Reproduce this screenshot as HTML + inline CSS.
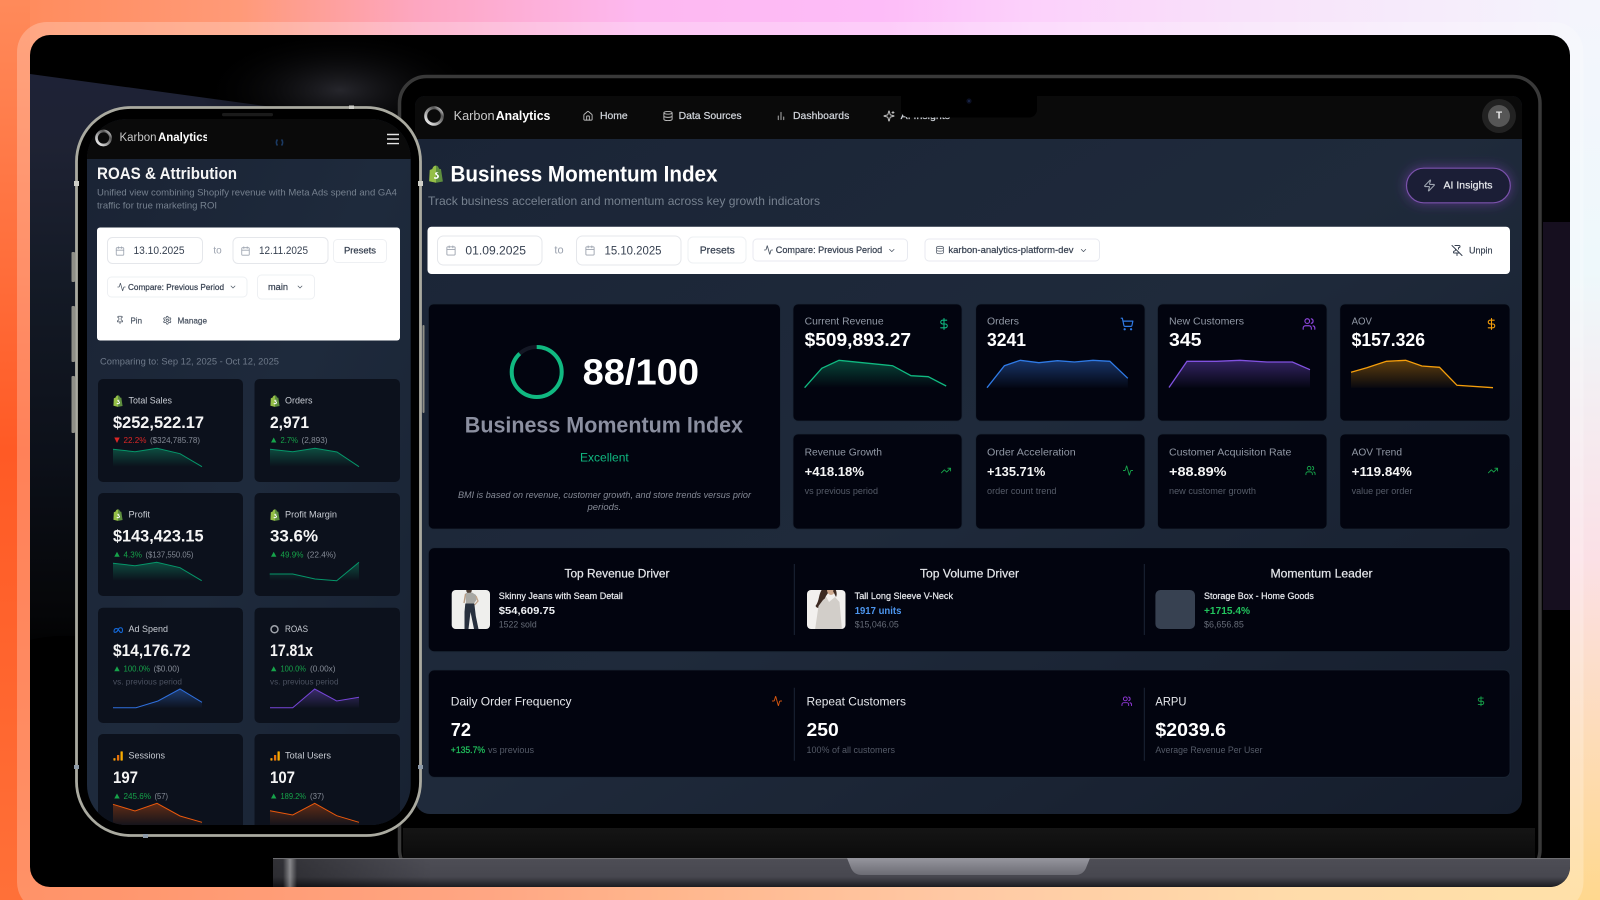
<!DOCTYPE html>
<html lang="en"><head><meta charset="utf-8"><title>Karbon Analytics</title>
<style>
html,body{margin:0;padding:0;background:#000;width:1600px;height:900px;overflow:hidden}
svg{display:block;font-family:"Liberation Sans",sans-serif;filter:blur(.3px)}
text{dominant-baseline:central}
.i{fill:none;stroke:currentColor;stroke-width:2;stroke-linecap:round;stroke-linejoin:round}
.b{font-weight:700}
.s{font-weight:400;fill:currentColor;stroke:currentColor;stroke-width:.22}
</style></head><body>
<svg width="1600" height="900" viewBox="0 0 1600 900" xmlns="http://www.w3.org/2000/svg">
<defs>
<linearGradient id="gT"><stop offset="0" stop-color="#ff8a5a"/><stop offset=".15" stop-color="#ff9a78"/><stop offset=".26" stop-color="#fda6c0"/><stop offset=".4" stop-color="#fdb8f0"/><stop offset=".55" stop-color="#fdbcf8"/><stop offset=".64" stop-color="#fcd0fb"/><stop offset=".78" stop-color="#f8e2fa"/><stop offset="1" stop-color="#f4f5fc"/></linearGradient>
<linearGradient id="gB"><stop offset="0" stop-color="#ff7038"/><stop offset=".3" stop-color="#ff8a5c"/><stop offset=".42" stop-color="#ffa06a"/><stop offset=".6" stop-color="#ffb888"/><stop offset=".8" stop-color="#ffd090"/><stop offset="1" stop-color="#ffd88e"/></linearGradient>
<linearGradient id="gL" x2="0" y2="1"><stop offset="0" stop-color="#ff8a5a"/><stop offset=".5" stop-color="#ff5a25"/><stop offset="1" stop-color="#ff7038"/></linearGradient>
<linearGradient id="gR" x2="0" y2="1"><stop offset="0" stop-color="#f4f5fc"/><stop offset=".3" stop-color="#eef8fb"/><stop offset=".62" stop-color="#fbe0e6"/><stop offset="1" stop-color="#ffd88e"/></linearGradient>
<linearGradient id="gN" x2="0" y2="1"><stop offset="0" stop-color="#1e2236"/><stop offset=".12" stop-color="#1e2233"/><stop offset=".35" stop-color="#141a26"/><stop offset=".65" stop-color="#0c1019"/><stop offset=".92" stop-color="#050608"/><stop offset="1" stop-color="#000"/></linearGradient>
<radialGradient id="gG"><stop offset="0" stop-color="#26262c"/><stop offset="1" stop-color="#000" stop-opacity="0"/></radialGradient>
<linearGradient id="gS" x1="0" y1="0" x2="1" y2="1"><stop offset="0" stop-color="#1a2436"/><stop offset=".5" stop-color="#1f2a3b"/><stop offset="1" stop-color="#151d2c"/></linearGradient>
<linearGradient id="gP" x1="0" y1="0" x2="1" y2="1"><stop offset="0" stop-color="#1a2334"/><stop offset=".5" stop-color="#1e2a3c"/><stop offset="1" stop-color="#182232"/></linearGradient>
<linearGradient id="gChin" x2="0" y2="1"><stop offset="0" stop-color="#151515"/><stop offset="1" stop-color="#080808"/></linearGradient>
<linearGradient id="gBase" x2="0" y2="1"><stop offset="0" stop-color="#56565c"/><stop offset=".08" stop-color="#4d4d55"/><stop offset=".65" stop-color="#47474f"/><stop offset=".92" stop-color="#26262b"/><stop offset="1" stop-color="#1c1c20"/></linearGradient>
<linearGradient id="gNotch" x2="0" y2="1"><stop offset="0" stop-color="#96969e"/><stop offset="1" stop-color="#6c6c74"/></linearGradient>
<linearGradient id="gHi"><stop offset="0" stop-color="#fff" stop-opacity="0"/><stop offset=".5" stop-color="#fff" stop-opacity=".42"/><stop offset="1" stop-color="#fff" stop-opacity="0"/></linearGradient>
<linearGradient id="gHd"><stop offset="0" stop-color="#000" stop-opacity=".38"/><stop offset="1" stop-color="#000" stop-opacity="0"/></linearGradient>
<linearGradient id="gRing" x1="0" y1="1" x2="1" y2="0"><stop offset="0" stop-color="#fff"/><stop offset=".5" stop-color="#8a8a8a"/><stop offset=".75" stop-color="#555"/><stop offset="1" stop-color="#eee"/></linearGradient>
<linearGradient id="aG" x2="0" y2="1"><stop offset="0" stop-color="#10b981" stop-opacity=".36"/><stop offset="1" stop-color="#10b981" stop-opacity="0"/></linearGradient>
<linearGradient id="aB" x2="0" y2="1"><stop offset="0" stop-color="#3b82f6" stop-opacity=".38"/><stop offset="1" stop-color="#3b82f6" stop-opacity=".02"/></linearGradient>
<linearGradient id="aP" x2="0" y2="1"><stop offset="0" stop-color="#8b5cf6" stop-opacity=".36"/><stop offset="1" stop-color="#8b5cf6" stop-opacity=".02"/></linearGradient>
<linearGradient id="aO" x2="0" y2="1"><stop offset="0" stop-color="#f59e0b" stop-opacity=".38"/><stop offset="1" stop-color="#f59e0b" stop-opacity=".03"/></linearGradient>
<linearGradient id="aR" x2="0" y2="1"><stop offset="0" stop-color="#ea580c" stop-opacity=".38"/><stop offset="1" stop-color="#ea580c" stop-opacity=".03"/></linearGradient>
<filter id="glow" x="-40%" y="-80%" width="180%" height="260%"><feGaussianBlur stdDeviation="6"/></filter>
<clipPath id="cFrame"><rect x="30" y="35" width="1540" height="852" rx="20"/></clipPath>
<clipPath id="cScreen"><path d="M425 96H1512a10 10 0 0 1 10 10V799a15 15 0 0 1-15 15H430a15 15 0 0 1-15-15V106a10 10 0 0 1 10-10z"/></clipPath>
<clipPath id="cPhone"><rect x="87" y="119" width="323.7" height="706" rx="40"/></clipPath>
<clipPath id="cPLogo"><rect x="90" y="125" width="117" height="28"/></clipPath>
<clipPath id="c1"><rect x="451.7" y="590" width="38.3" height="39" rx="4"/></clipPath>
<clipPath id="c2"><rect x="807" y="590" width="38.5" height="39" rx="4"/></clipPath>

<symbol id="cal" viewBox="0 0 24 24"><rect class="i" x="3" y="4" width="18" height="18" rx="2"/><path class="i" d="M16 2v4M8 2v4M3 10h18"/></symbol>
<symbol id="home" viewBox="0 0 24 24"><path class="i" d="M15 21v-8a1 1 0 0 0-1-1h-4a1 1 0 0 0-1 1v8"/><path class="i" d="M3 10a2 2 0 0 1 .709-1.528l7-5.999a2 2 0 0 1 2.582 0l7 5.999A2 2 0 0 1 21 10v9a2 2 0 0 1-2 2H5a2 2 0 0 1-2-2z"/></symbol>
<symbol id="db" viewBox="0 0 24 24"><ellipse class="i" cx="12" cy="5" rx="9" ry="3"/><path class="i" d="M3 5V19A9 3 0 0 0 21 19V5M3 12A9 3 0 0 0 21 12"/></symbol>
<symbol id="bars" viewBox="0 0 24 24"><path class="i" d="M18 20v-6M12 20V4M6 20v-8"/></symbol>
<symbol id="spark" viewBox="0 0 24 24"><path class="i" d="M9.937 15.5A2 2 0 0 0 8.5 14.063l-6.135-1.582a.5.5 0 0 1 0-.962L8.5 9.936A2 2 0 0 0 9.937 8.5l1.582-6.135a.5.5 0 0 1 .963 0L14.063 8.5A2 2 0 0 0 15.5 9.937l6.135 1.581a.5.5 0 0 1 0 .964L15.5 14.063a2 2 0 0 0-1.437 1.437l-1.582 6.135a.5.5 0 0 1-.963 0z"/><path class="i" d="M20 3v4M22 5h-4"/></symbol>
<symbol id="act" viewBox="0 0 24 24"><path class="i" d="M22 12h-2.48a2 2 0 0 0-1.93 1.46l-2.35 8.36a.25.25 0 0 1-.48 0L9.24 2.18a.25.25 0 0 0-.48 0l-2.35 8.36A2 2 0 0 1 4.49 12H2"/></symbol>
<symbol id="chev" viewBox="0 0 24 24"><path class="i" d="m6 9 6 6 6-6"/></symbol>
<symbol id="zap" viewBox="0 0 24 24"><path class="i" d="M4 14a1 1 0 0 1-.78-1.63l9.9-10.2a.5.5 0 0 1 .86.46l-1.92 6.02A1 1 0 0 0 13 10h7a1 1 0 0 1 .78 1.63l-9.9 10.2a.5.5 0 0 1-.86-.46l1.92-6.02A1 1 0 0 0 11 14z"/></symbol>
<symbol id="pin" viewBox="0 0 24 24"><path class="i" d="M12 17v5"/><path class="i" d="M9 10.76a2 2 0 0 1-1.11 1.79l-1.78.9A2 2 0 0 0 5 15.24V16a1 1 0 0 0 1 1h12a1 1 0 0 0 1-1v-.76a2 2 0 0 0-1.11-1.79l-1.78-.9A2 2 0 0 1 15 10.76V7a1 1 0 0 1 1-1 2 2 0 0 0 0-4H8a2 2 0 0 0 0 4 1 1 0 0 1 1 1z"/></symbol>
<symbol id="pinoff" viewBox="0 0 24 24"><path class="i" d="M12 17v5M15 9.34V7a1 1 0 0 1 1-1 2 2 0 0 0 0-4H7.89M2 2l20 20M9 9v1.76a2 2 0 0 1-1.11 1.79l-1.78.9A2 2 0 0 0 5 15.24V16a1 1 0 0 0 1 1h11"/></symbol>
<symbol id="gear" viewBox="0 0 24 24"><path class="i" d="M12.22 2h-.44a2 2 0 0 0-2 2v.18a2 2 0 0 1-1 1.73l-.43.25a2 2 0 0 1-2 0l-.15-.08a2 2 0 0 0-2.73.73l-.22.38a2 2 0 0 0 .73 2.73l.15.1a2 2 0 0 1 1 1.72v.51a2 2 0 0 1-1 1.74l-.15.09a2 2 0 0 0-.73 2.73l.22.38a2 2 0 0 0 2.73.73l.15-.08a2 2 0 0 1 2 0l.43.25a2 2 0 0 1 1 1.73V20a2 2 0 0 0 2 2h.44a2 2 0 0 0 2-2v-.18a2 2 0 0 1 1-1.73l.43-.25a2 2 0 0 1 2 0l.15.08a2 2 0 0 0 2.73-.73l.22-.39a2 2 0 0 0-.73-2.73l-.15-.08a2 2 0 0 1-1-1.74v-.5a2 2 0 0 1 1-1.74l.15-.09a2 2 0 0 0 .73-2.73l-.22-.38a2 2 0 0 0-2.73-.73l-.15.08a2 2 0 0 1-2 0l-.43-.25a2 2 0 0 1-1-1.73V4a2 2 0 0 0-2-2z"/><circle class="i" cx="12" cy="12" r="3"/></symbol>
<symbol id="usd" viewBox="0 0 24 24"><path class="i" d="M12 2v20M17 5H9.5a3.5 3.5 0 0 0 0 7h5a3.5 3.5 0 0 1 0 7H6"/></symbol>
<symbol id="cart" viewBox="0 0 24 24"><circle class="i" cx="8" cy="21" r="1"/><circle class="i" cx="19" cy="21" r="1"/><path class="i" d="M2.05 2.05h2l2.66 12.42a2 2 0 0 0 2 1.58h9.78a2 2 0 0 0 1.95-1.57l1.65-7.43H5.12"/></symbol>
<symbol id="users" viewBox="0 0 24 24"><path class="i" d="M16 21v-2a4 4 0 0 0-4-4H6a4 4 0 0 0-4 4v2"/><circle class="i" cx="9" cy="7" r="4"/><path class="i" d="M22 21v-2a4 4 0 0 0-3-3.87M16 3.13a4 4 0 0 1 0 7.75"/></symbol>
<symbol id="trend" viewBox="0 0 24 24"><path class="i" d="M22 7 13.5 15.5 8.5 10.5 2 17M16 7h6v6"/></symbol>
<symbol id="shop" viewBox="0 0 24 28"><path d="M2 7.5 6 6C7 2 9.5.5 12 .5V28L1 25.5z" fill="#95bf47"/><path d="M12 .5C15 .5 16 3 17 5.5l3 .7L23 26l-11 2z" fill="#5e8e3e"/><path d="M15.5 11.6c-.9-.5-4.6-1.2-5 1.3-.4 2.7 3.8 2.6 3.4 5.2-.3 1.7-2.8 1.6-4.5.5l-.7 2.4c2.7 1.5 7.4.9 8-2.8.5-3.3-3.6-3.6-3.3-5.1.2-.9 1.9-.7 2.6-.3z" fill="#fff"/></symbol>
<symbol id="ga" viewBox="0 0 24 24"><rect x="1" y="17" width="5" height="6" rx="1" fill="#f59e0b"/><rect x="9.5" y="9.5" width="5.5" height="13.5" rx="1" fill="#e8710a"/><rect x="18" y="1" width="5.5" height="22" rx="1" fill="#f9ab00"/></symbol>
</defs>

<!-- gradient backdrop -->
<rect width="1600" height="900" fill="url(#gT)"/>
<rect y="760" width="1600" height="140" fill="url(#gB)"/>
<rect width="30" height="900" fill="url(#gL)"/>
<rect x="1570" width="30" height="900" fill="url(#gR)"/>
<rect x="17" y="22" width="1566.5" height="890" rx="30" fill="#fff" fill-opacity=".24"/>

<!-- black frame -->
<g clip-path="url(#cFrame)">
<rect x="30" y="35" width="1540" height="852" fill="#000"/>
<path d="M30 74 280 108V660H30z" fill="url(#gN)"/>
<path d="M30 640C70 630 110 640 150 650V660H30z" fill="#000"/>
<ellipse cx="340" cy="90" rx="140" ry="60" fill="url(#gG)"/>
<rect x="1543" y="222" width="27" height="388" fill="#160f1f"/>

<!-- laptop body -->
<rect x="399.5" y="76.5" width="1140.5" height="800" rx="27" fill="#000" stroke="#393939" stroke-width="3.5"/>
<rect x="403" y="828" width="1132" height="40" fill="url(#gChin)"/>
<g clip-path="url(#cScreen)">
<rect x="415" y="96" width="1108" height="718" fill="url(#gS)"/>
<rect x="415" y="96" width="1108" height="43" fill="#0a0a0a"/>

<!-- top nav -->
<circle cx="434" cy="116" r="8.3" fill="none" stroke="url(#gRing)" stroke-width="3"/>
<text x="453.6" y="116" font-size="12.5" fill="#c9c9c9" textLength="41" lengthAdjust="spacingAndGlyphs">Karbon</text>
<text x="495.7" y="116" font-size="12.5" class="b" fill="#fff" textLength="54.7" lengthAdjust="spacingAndGlyphs">Analytics</text>
<use href="#home" x="582.5" y="110.5" width="11" height="11" color="#bdbdbd"/>
<text x="600" y="116" font-size="10.5" color="#d1d5db" class="s" textLength="27.7" lengthAdjust="spacingAndGlyphs">Home</text>
<use href="#db" x="662.5" y="110.5" width="11" height="11" color="#bdbdbd"/>
<text x="678.6" y="116" font-size="10.5" color="#d1d5db" class="s" textLength="63" lengthAdjust="spacingAndGlyphs">Data Sources</text>
<use href="#bars" x="775.5" y="110.5" width="11" height="11" color="#bdbdbd"/>
<text x="793" y="116" font-size="10.5" color="#d1d5db" class="s" textLength="56.3" lengthAdjust="spacingAndGlyphs">Dashboards</text>
<use href="#spark" x="883" y="110" width="12" height="12" color="#bdbdbd"/>
<text x="900.6" y="116" font-size="10.5" color="#d1d5db" class="s" textLength="49.4" lengthAdjust="spacingAndGlyphs">AI Insights</text>
<path d="M901 96H1037V109a8 8 0 0 1-8 8.5H909a8 8 0 0 1-8-8.5z" fill="#000"/>
<circle cx="969" cy="101" r="2.6" fill="#0b1024"/><circle cx="969" cy="101" r="1" fill="#1c2a50"/>
<circle cx="1499" cy="116" r="17" fill="#222"/><circle cx="1499" cy="116" r="11" fill="#565656"/>
<text x="1499" y="116" font-size="10" class="b" fill="#eee" text-anchor="middle">T</text>

<!-- heading -->
<use href="#shop" x="428.5" y="165" width="15" height="18"/>
<text x="450.5" y="174" font-size="22" class="b" fill="#fff" textLength="267" lengthAdjust="spacingAndGlyphs">Business Momentum Index</text>
<text x="428" y="201" font-size="12" fill="#76818f" textLength="392" lengthAdjust="spacingAndGlyphs">Track business acceleration and momentum across key growth indicators</text>
<rect x="1406" y="168" width="104.5" height="35" rx="17.5" fill="#8b45c8" fill-opacity=".55" filter="url(#glow)"/>
<rect x="1406.5" y="168.2" width="103.8" height="34.6" rx="17.3" fill="#1b1e36" stroke="#7a52ab" stroke-width="1.2"/>
<use href="#zap" x="1423" y="179" width="13" height="13" color="#9ca3af"/>
<text x="1443.5" y="185.5" font-size="10.5" class="s" color="#e5e7eb" textLength="49" lengthAdjust="spacingAndGlyphs">AI Insights</text>

<!-- filter bar -->
<rect x="427.5" y="226.7" width="1082.5" height="47.3" rx="4" fill="#fff"/>
<rect x="437.5" y="236" width="104.5" height="29" rx="6" fill="#fff" stroke="#e5e7eb"/>
<use href="#cal" x="445.5" y="244" width="11" height="13" color="#9ca3af"/>
<text x="465.4" y="250.3" font-size="12" fill="#374151" textLength="60.6" lengthAdjust="spacingAndGlyphs">01.09.2025</text>
<text x="559" y="250.3" font-size="11" fill="#9ca3af" text-anchor="middle">to</text>
<rect x="576.5" y="236" width="104.5" height="29" rx="6" fill="#fff" stroke="#e5e7eb"/>
<use href="#cal" x="584.5" y="244" width="11" height="13" color="#9ca3af"/>
<text x="604.5" y="250.3" font-size="12" fill="#374151" textLength="57" lengthAdjust="spacingAndGlyphs">15.10.2025</text>
<rect x="688" y="237" width="58" height="26" rx="5" fill="#fff" stroke="#eef0f3"/>
<text x="699.7" y="250.3" font-size="10.5" class="s" color="#374151" textLength="35.2" lengthAdjust="spacingAndGlyphs">Presets</text>
<rect x="753" y="239" width="154.5" height="22" rx="4" fill="#fff" stroke="#e8eaf0"/>
<use href="#act" x="763.5" y="245" width="10" height="10" color="#4b5563"/>
<text x="775.8" y="250.3" font-size="9.5" class="s" color="#374151" textLength="106.4" lengthAdjust="spacingAndGlyphs">Compare: Previous Period</text>
<use href="#chev" x="887.3" y="246" width="9" height="9" color="#4b5563"/>
<rect x="925" y="239" width="174.5" height="22" rx="4" fill="#fff" stroke="#e8eaf0"/>
<use href="#db" x="935.5" y="245" width="9" height="10" color="#4b5563"/>
<text x="948.4" y="250.3" font-size="9.5" class="s" color="#374151" textLength="125.1" lengthAdjust="spacingAndGlyphs">karbon-analytics-platform-dev</text>
<use href="#chev" x="1079" y="246" width="9" height="9" color="#4b5563"/>
<use href="#pinoff" x="1451" y="244" width="12" height="13" color="#374151"/>
<text x="1469" y="250.8" font-size="9.5" class="s" color="#374151" textLength="23.5" lengthAdjust="spacingAndGlyphs">Unpin</text>

<!-- cards -->
<g fill="#02040f" stroke="#1b2635" stroke-width=".8">
<rect x="428.4" y="304" width="352" height="225" rx="5"/>
<rect x="793" y="304" width="169" height="117" rx="5"/>
<rect x="975.7" y="304" width="169.3" height="117" rx="5"/>
<rect x="1157.5" y="304" width="169.5" height="117" rx="5"/>
<rect x="1339.8" y="304" width="170.2" height="117" rx="5"/>
<rect x="793" y="434" width="169" height="95" rx="5"/>
<rect x="975.7" y="434" width="169.3" height="95" rx="5"/>
<rect x="1157.5" y="434" width="169.5" height="95" rx="5"/>
<rect x="1339.8" y="434" width="170.2" height="95" rx="5"/>
<rect x="428.4" y="547.7" width="1081.6" height="104" rx="6"/>
<rect x="428.4" y="670" width="1081.6" height="107.3" rx="6"/>
</g>
<circle cx="536.7" cy="372" r="25" fill="none" stroke="#141825" stroke-width="4"/>
<circle cx="536.7" cy="372" r="25" fill="none" stroke="#10b981" stroke-width="4" stroke-dasharray="138.2 19" transform="rotate(-90 536.7 372)"/>
<text x="582.6" y="372" font-size="36" class="b" fill="#fff" textLength="116.4" lengthAdjust="spacingAndGlyphs">88/100</text>
<text x="464.8" y="425" font-size="22" class="b" fill="#8b8fa0" textLength="278.2" lengthAdjust="spacingAndGlyphs">Business Momentum Index</text>
<text x="604.4" y="457.5" font-size="12" fill="#10b981" text-anchor="middle">Excellent</text>
<text x="458" y="495.7" font-size="9.5" font-style="italic" fill="#858a96" textLength="293" lengthAdjust="spacingAndGlyphs">BMI is based on revenue, customer growth, and store trends versus prior</text>
<text x="604.4" y="507.5" font-size="9.5" font-style="italic" fill="#858a96" text-anchor="middle">periods.</text>

<!-- metric cards -->
<g font-size="10.5" fill="#9198a5">
<text x="804.6" y="321.7" textLength="79" lengthAdjust="spacingAndGlyphs">Current Revenue</text>
<text x="987" y="321.7" textLength="32" lengthAdjust="spacingAndGlyphs">Orders</text>
<text x="1169" y="321.7" textLength="75" lengthAdjust="spacingAndGlyphs">New Customers</text>
<text x="1351.6" y="321.7" textLength="20.4" lengthAdjust="spacingAndGlyphs">AOV</text>
<text x="804.6" y="452.3" textLength="77.4" lengthAdjust="spacingAndGlyphs">Revenue Growth</text>
<text x="987" y="452.3" textLength="88.7" lengthAdjust="spacingAndGlyphs">Order Acceleration</text>
<text x="1169" y="452.3" textLength="122.4" lengthAdjust="spacingAndGlyphs">Customer Acquisiton Rate</text>
<text x="1351.6" y="452.3" textLength="50.4" lengthAdjust="spacingAndGlyphs">AOV Trend</text>
</g>
<g font-size="18" class="b" fill="#fff">
<text x="804.6" y="340" textLength="106.4" lengthAdjust="spacingAndGlyphs">$509,893.27</text>
<text x="987" y="340" textLength="39" lengthAdjust="spacingAndGlyphs">3241</text>
<text x="1169" y="340" textLength="32.5" lengthAdjust="spacingAndGlyphs">345</text>
<text x="1351.6" y="340" textLength="73.4" lengthAdjust="spacingAndGlyphs">$157.326</text>
</g>
<g font-size="13" class="b" fill="#f5f5f5">
<text x="804.6" y="471.7" textLength="59.4" lengthAdjust="spacingAndGlyphs">+418.18%</text>
<text x="987" y="471.7" textLength="58.3" lengthAdjust="spacingAndGlyphs">+135.71%</text>
<text x="1169" y="471.7" textLength="57.5" lengthAdjust="spacingAndGlyphs">+88.89%</text>
<text x="1351.6" y="471.7" textLength="60.2" lengthAdjust="spacingAndGlyphs">+119.84%</text>
</g>
<g font-size="9" fill="#565c69">
<text x="804.6" y="491" textLength="73.4" lengthAdjust="spacingAndGlyphs">vs previous period</text>
<text x="987" y="491" textLength="69.5" lengthAdjust="spacingAndGlyphs">order count trend</text>
<text x="1169" y="491" textLength="87" lengthAdjust="spacingAndGlyphs">new customer growth</text>
<text x="1351.6" y="491" textLength="60.8" lengthAdjust="spacingAndGlyphs">value per order</text>
</g>
<use href="#usd" x="937.5" y="317" width="13" height="14" color="#10b981"/>
<use href="#cart" x="1120" y="317" width="14" height="14" color="#2f7ae5"/>
<use href="#users" x="1302" y="317" width="14" height="14" color="#8b45d9"/>
<use href="#usd" x="1485" y="317" width="13" height="14" color="#f59e0b"/>
<use href="#trend" x="940.5" y="465" width="11" height="11" color="#16a34a"/>
<use href="#act" x="1122.5" y="465" width="11" height="11" color="#16a34a"/>
<use href="#users" x="1305" y="465" width="11" height="11" color="#16a34a"/>
<use href="#trend" x="1487.5" y="465" width="11" height="11" color="#16a34a"/>

<!-- big charts -->
<path d="M804.6 387.7 821.8 368.3 839 360.3 892.6 365.7 911 375.7 928.2 376.7 946.2 386V387.7z" fill="url(#aG)"/>
<polyline points="804.6,387.7 821.8,368.3 839,360.3 892.6,365.7 911,375.7 928.2,376.7 946.2,386" fill="none" stroke="#10b981" stroke-width="1.3"/>
<path d="M987 387.7 1004.4 365.7 1020.3 360.3 1038.9 362.7 1057.5 360.7 1074.4 362 1093 360.3 1109.9 361.3 1127.8 378.3V387.7z" fill="url(#aB)"/>
<polyline points="987,387.7 1004.4,365.7 1020.3,360.3 1038.9,362.7 1057.5,360.7 1074.4,362 1093,360.3 1109.9,361.3 1127.8,378.3" fill="none" stroke="#2f7ae5" stroke-width="1.3"/>
<path d="M1169 387.5 1187 361.3 1216.4 361.3 1240 360.3 1267 362 1292.4 362 1310 369.7V387.5z" fill="url(#aP)"/>
<polyline points="1169,387.5 1187,361.3 1216.4,361.3 1240,360.3 1267,362 1292.4,362 1310,369.7" fill="none" stroke="#8152e0" stroke-width="1.3"/>
<path d="M1351 372.3 1366.8 367.7 1386.4 361.3 1405.7 360.3 1421.9 366 1439.5 367.3 1457 385.3 1493 387.7H1351z" fill="url(#aO)"/>
<polyline points="1351,372.3 1366.8,367.7 1386.4,361.3 1405.7,360.3 1421.9,366 1439.5,367.3 1457,385.3 1493,387.7" fill="none" stroke="#f59e0b" stroke-width="1.3"/>

<!-- top drivers -->
<path d="M794.3 564V635M1144.3 564V635M794.3 687.7V760.7M1144.3 687.7V760.7" stroke="#1c2636" stroke-width="1"/>
<g font-size="12" class="s" color="#e5e7eb" text-anchor="middle">
<text x="617" y="573.3" textLength="105" lengthAdjust="spacingAndGlyphs">Top Revenue Driver</text>
<text x="969.5" y="573.3" textLength="99" lengthAdjust="spacingAndGlyphs">Top Volume Driver</text>
<text x="1321.5" y="573.3" textLength="102" lengthAdjust="spacingAndGlyphs">Momentum Leader</text>
</g>
<rect x="451.7" y="590" width="38.3" height="39" rx="4" fill="#efefed"/>
<g clip-path="url(#c1)">
<ellipse cx="469" cy="590" rx="2.8" ry="3.6" fill="#4a3a30"/>
<path d="M465.5 593 472 592.5 476 595 476.500 600 473.500 604H466z" fill="#a8a8a4"/>
<path d="M476 596 478 601 474.500 605" fill="none" stroke="#c2a58c" stroke-width="1.300"/>
<path d="M465.500 594 464 603" fill="none" stroke="#b89a80" stroke-width="1.300"/>
<path d="M465.300 603.500 474.300 603.500 475.800 616 478.500 629H474L470.500 612 468.500 629H464.500L464.500 612z" fill="#27303e"/>
</g>
<rect x="807" y="590" width="38.500" height="39" rx="4" fill="#f2f0ee"/>
<g clip-path="url(#c2)">
<path d="M823 588C818 594 820 600 815.500 606 818 610 821 607 823 603L826 596 830 590z" fill="#3c2a22"/>
<ellipse cx="831" cy="590" rx="4" ry="5" fill="#cda98f"/>
<path d="M835 588C837 592 837 595 836 597L833 591z" fill="#3c2a22"/>
<path d="M815 630 818.500 606 823 600 826.500 597 829 602 835 597 839.500 602 842 630z" fill="#d2cec9"/>
</g>
<rect x="1155.4" y="590" width="39.6" height="39" rx="5" fill="#374151"/>
<g font-size="9" class="s" color="#e5e7eb">
<text x="498.8" y="596" textLength="124" lengthAdjust="spacingAndGlyphs">Skinny Jeans with Seam Detail</text>
<text x="854.7" y="596" textLength="98.3" lengthAdjust="spacingAndGlyphs">Tall Long Sleeve V-Neck</text>
<text x="1204" y="596" textLength="109.8" lengthAdjust="spacingAndGlyphs">Storage Box - Home Goods</text>
</g>
<g font-size="10.5" class="b">
<text x="498.8" y="611" fill="#eef0f3" textLength="56.2" lengthAdjust="spacingAndGlyphs">$54,609.75</text>
<text x="854.7" y="611" fill="#4d96ef" textLength="46.7" lengthAdjust="spacingAndGlyphs">1917 units</text>
<text x="1204" y="611" fill="#22c55e" textLength="46" lengthAdjust="spacingAndGlyphs">+1715.4%</text>
</g>
<g font-size="9" fill="#666c78">
<text x="498.8" y="624.3" textLength="37.9" lengthAdjust="spacingAndGlyphs">1522 sold</text>
<text x="854.7" y="624.3" textLength="44.1" lengthAdjust="spacingAndGlyphs">$15,046.05</text>
<text x="1204" y="624.3" textLength="39.8" lengthAdjust="spacingAndGlyphs">$6,656.85</text>
</g>

<!-- bottom metrics -->
<g font-size="12" fill="#e5e7eb">
<text x="450.8" y="701.7" textLength="120.7" lengthAdjust="spacingAndGlyphs">Daily Order Frequency</text>
<text x="806.5" y="701.7" textLength="99.5" lengthAdjust="spacingAndGlyphs">Repeat Customers</text>
<text x="1155.4" y="701.7" textLength="31" lengthAdjust="spacingAndGlyphs">ARPU</text>
</g>
<g font-size="18" class="b" fill="#fff">
<text x="450.8" y="730" textLength="20.2" lengthAdjust="spacingAndGlyphs">72</text>
<text x="806.5" y="730" textLength="32.2" lengthAdjust="spacingAndGlyphs">250</text>
<text x="1155.4" y="730" textLength="70.6" lengthAdjust="spacingAndGlyphs">$2039.6</text>
</g>
<text x="450.8" y="750" font-size="9" class="s" color="#22c55e" textLength="34.2" lengthAdjust="spacingAndGlyphs">+135.7%</text>
<g font-size="9" fill="#555b68">
<text x="488" y="750" textLength="46" lengthAdjust="spacingAndGlyphs">vs previous</text>
<text x="806.5" y="750" textLength="88.5" lengthAdjust="spacingAndGlyphs">100% of all customers</text>
<text x="1155.4" y="750" textLength="107.1" lengthAdjust="spacingAndGlyphs">Average Revenue Per User</text>
</g>
<use href="#act" x="771.5" y="695.5" width="11" height="11" color="#d9570f"/>
<use href="#users" x="1121" y="695.5" width="11.5" height="11.5" color="#9038d8"/>
<use href="#usd" x="1475.5" y="695.5" width="11" height="11.5" color="#16a34a"/>
</g>

<!-- laptop base -->
<rect x="273" y="858" width="1300" height="29" fill="url(#gBase)"/>
<rect x="273" y="858" width="1300" height="1" fill="#6e6e72"/>
<rect x="273" y="859" width="160" height="28" fill="url(#gHd)"/>
<rect x="283" y="859" width="14" height="28" fill="url(#gHi)"/>
<path d="M847 858H1090L1086 868Q1083 875 1075 875H862Q854 875 851 868z" fill="url(#gNotch)"/>
</g>

<!-- phone -->
<g>
<g fill="#8f8f87"><rect x="71.5" y="252" width="3.500" height="30" rx="1"/><rect x="71.5" y="306" width="3.500" height="56" rx="1"/><rect x="71.5" y="376" width="3.500" height="57" rx="1"/><rect x="422.5" y="325" width="2" height="88" rx="1"/></g>
<rect x="76.5" y="107.5" width="344" height="728" rx="54" fill="#000" stroke="#aaaaa0" stroke-width="2.800"/>
<g fill="#cfcfc8"><rect x="349" y="105.5" width="5" height="3.5"/><rect x="74" y="181" width="5" height="5"/><rect x="418" y="181" width="5" height="5"/></g>
<g fill="#8d9aa8"><rect x="74" y="765" width="5" height="4"/><rect x="418" y="765" width="5" height="4"/><rect x="143" y="834" width="5" height="4"/></g>
<rect x="222" y="113" width="51" height="3.2" rx="1.6" fill="#1a1a1a"/>
<g clip-path="url(#cPhone)">
<rect x="87" y="119" width="324" height="706" fill="url(#gP)"/>
<rect x="87" y="119" width="324" height="40" fill="#0a0a0a"/>
<circle cx="103.5" cy="138" r="7" fill="none" stroke="url(#gRing)" stroke-width="2.700"/>
<g clip-path="url(#cPLogo)">
<text x="119.5" y="138" font-size="11.5" fill="#c9c9c9" textLength="37" lengthAdjust="spacingAndGlyphs">Karbon</text>
<text x="158" y="138" font-size="11.5" class="b" fill="#fff" textLength="51" lengthAdjust="spacingAndGlyphs">Analytics</text>
</g>
<path d="M277.5 139.5C276 141 276 144 277.5 145.5M281.5 139.5C283 141 283 144 281.5 145.5" fill="none" stroke="#1b3a63" stroke-width="1.6"/>
<path d="M387 134.5H399M387 139H399M387 143.6H399" stroke="#e5e5e5" stroke-width="1.4"/>
<text x="97" y="174" font-size="16.5" class="b" fill="#f5f5f5" textLength="140" lengthAdjust="spacingAndGlyphs">ROAS &amp; Attribution</text>
<g font-size="9.5" fill="#76818f">
<text x="97" y="193" textLength="300" lengthAdjust="spacingAndGlyphs">Unified view combining Shopify revenue with Meta Ads spend and GA4</text>
<text x="97" y="206" textLength="120" lengthAdjust="spacingAndGlyphs">traffic for true marketing ROI</text>
</g>

<rect x="97" y="227.5" width="303" height="113" rx="3" fill="#fff"/>
<rect x="107.5" y="237.5" width="95" height="26" rx="5" fill="#fff" stroke="#e5e7eb"/>
<use href="#cal" x="115" y="245.5" width="10" height="11" color="#9ca3af"/>
<text x="133.5" y="251" font-size="11" fill="#374151" textLength="51" lengthAdjust="spacingAndGlyphs">13.10.2025</text>
<text x="217.5" y="251" font-size="10" fill="#9ca3af" text-anchor="middle">to</text>
<rect x="233" y="237.5" width="95" height="26" rx="5" fill="#fff" stroke="#e5e7eb"/>
<use href="#cal" x="240.5" y="245.5" width="10" height="11" color="#9ca3af"/>
<text x="259" y="251" font-size="11" fill="#374151" textLength="49" lengthAdjust="spacingAndGlyphs">12.11.2025</text>
<rect x="333.5" y="239.5" width="53" height="23" rx="4" fill="#fff" stroke="#eef0f3"/>
<text x="344" y="251" font-size="9.5" class="s" color="#374151" textLength="32" lengthAdjust="spacingAndGlyphs">Presets</text>
<rect x="107.5" y="277" width="139.5" height="20" rx="4" fill="#fff" stroke="#eef0f3"/>
<use href="#act" x="117" y="282.5" width="9" height="9" color="#4b5563"/>
<text x="128" y="287" font-size="8.5" class="s" color="#374151" textLength="96" lengthAdjust="spacingAndGlyphs">Compare: Previous Period</text>
<use href="#chev" x="229" y="283" width="8" height="8" color="#4b5563"/>
<rect x="257.5" y="275" width="57" height="24" rx="4" fill="#fff" stroke="#eef0f3"/>
<text x="268" y="287" font-size="9" class="s" color="#374151" textLength="20" lengthAdjust="spacingAndGlyphs">main</text>
<use href="#chev" x="296" y="283" width="8" height="8" color="#4b5563"/>
<use href="#pin" x="115.5" y="314.5" width="9" height="11" color="#4b5563"/>
<text x="130.5" y="320.3" font-size="8.5" class="s" color="#4b5563" textLength="11.5" lengthAdjust="spacingAndGlyphs">Pin</text>
<use href="#gear" x="162.5" y="315.5" width="9.5" height="9.5" color="#4b5563"/>
<text x="177.5" y="320.3" font-size="8.5" class="s" color="#4b5563" textLength="29.5" lengthAdjust="spacingAndGlyphs">Manage</text>
<text x="100" y="362" font-size="9.5" fill="#6f7a8a" textLength="179" lengthAdjust="spacingAndGlyphs">Comparing to: Sep 12, 2025 - Oct 12, 2025</text>

<g fill="#0c111c">
<rect x="98" y="379" width="145" height="103" rx="5"/><rect x="254.5" y="379" width="145.5" height="103" rx="5"/>
<rect x="98" y="493" width="145" height="103" rx="5"/><rect x="254.5" y="493" width="145.5" height="103" rx="5"/>
<rect x="98" y="607.7" width="145" height="115.3" rx="5"/><rect x="254.5" y="607.7" width="145.5" height="115.3" rx="5"/>
<rect x="98" y="734" width="145" height="100" rx="5"/><rect x="254.5" y="734" width="145.5" height="100" rx="5"/>
</g>
<use href="#shop" x="113" y="395" width="10" height="12"/>
<use href="#shop" x="270" y="395" width="10" height="12"/>
<use href="#shop" x="113" y="509" width="10" height="12"/>
<use href="#shop" x="270" y="509" width="10" height="12"/>
<path d="M114 631.5C114 628 117.5 627.500 119 630.500 120.500 633.500 122.500 633 122.500 630 122.500 627 119 627 118 630 117 632.500 114 633 114 631.500z" fill="none" stroke="#1468d8" stroke-width="1.1"/>
<circle cx="274.5" cy="629.3" r="3.5" fill="none" stroke="#a0a4ab" stroke-width="1.5"/>
<use href="#ga" x="113" y="751" width="10" height="10"/>
<use href="#ga" x="270" y="751" width="10" height="10"/>
<g font-size="9.5" fill="#c8ccd3">
<text x="128.5" y="401" textLength="43.5" lengthAdjust="spacingAndGlyphs">Total Sales</text>
<text x="285" y="401" textLength="27.5" lengthAdjust="spacingAndGlyphs">Orders</text>
<text x="128.5" y="515" textLength="21.5" lengthAdjust="spacingAndGlyphs">Profit</text>
<text x="285" y="515" textLength="52" lengthAdjust="spacingAndGlyphs">Profit Margin</text>
<text x="128.5" y="629.3" textLength="39.5" lengthAdjust="spacingAndGlyphs">Ad Spend</text>
<text x="285" y="629.3" textLength="23" lengthAdjust="spacingAndGlyphs">ROAS</text>
<text x="128.5" y="756" textLength="36.5" lengthAdjust="spacingAndGlyphs">Sessions</text>
<text x="285" y="756" textLength="46" lengthAdjust="spacingAndGlyphs">Total Users</text>
</g>
<g font-size="16.5" class="b" fill="#f5f5f5">
<text x="113" y="423" textLength="91" lengthAdjust="spacingAndGlyphs">$252,522.17</text>
<text x="270" y="423" textLength="39" lengthAdjust="spacingAndGlyphs">2,971</text>
<text x="113" y="536.7" textLength="90.5" lengthAdjust="spacingAndGlyphs">$143,423.15</text>
<text x="270" y="536.7" textLength="48" lengthAdjust="spacingAndGlyphs">33.6%</text>
<text x="113" y="651" textLength="77.5" lengthAdjust="spacingAndGlyphs">$14,176.72</text>
<text x="270" y="651" textLength="43" lengthAdjust="spacingAndGlyphs">17.81x</text>
<text x="113" y="778" textLength="25" lengthAdjust="spacingAndGlyphs">197</text>
<text x="270" y="778" textLength="25" lengthAdjust="spacingAndGlyphs">107</text>
</g>
<path d="M114.3 437.5H119.7L117 443z" fill="#dc2626"/>
<path d="M271 442.5H276.4L273.7 437.5zM114.3 556.800H119.7L117 551.800zM271 556.800H276.4L273.7 551.800zM114.3 671.200H119.7L117 666.200zM271 671.200H276.4L273.7 666.200zM114.3 798.500H119.700L117 793.500zM271 798.500H276.4L273.7 793.500z" fill="#16a34a"/>
<g font-size="8.5">
<text x="123.5" y="440" fill="#dc2626" textLength="23" lengthAdjust="spacingAndGlyphs">22.2%</text>
<g fill="#16a34a">
<text x="280.5" y="440" textLength="17.5" lengthAdjust="spacingAndGlyphs">2.7%</text>
<text x="123.5" y="554.3" textLength="18.5" lengthAdjust="spacingAndGlyphs">4.3%</text>
<text x="280.5" y="554.3" textLength="23" lengthAdjust="spacingAndGlyphs">49.9%</text>
<text x="123.5" y="668.7" textLength="26.5" lengthAdjust="spacingAndGlyphs">100.0%</text>
<text x="280.5" y="668.7" textLength="25.5" lengthAdjust="spacingAndGlyphs">100.0%</text>
<text x="123.5" y="796" textLength="27.5" lengthAdjust="spacingAndGlyphs">245.6%</text>
<text x="280.5" y="796" textLength="25.5" lengthAdjust="spacingAndGlyphs">189.2%</text>
</g>
<g fill="#858b96">
<text x="150" y="440" textLength="50" lengthAdjust="spacingAndGlyphs">($324,785.78)</text>
<text x="301.5" y="440" textLength="26" lengthAdjust="spacingAndGlyphs">(2,893)</text>
<text x="145.5" y="554.3" textLength="48" lengthAdjust="spacingAndGlyphs">($137,550.05)</text>
<text x="307" y="554.3" textLength="29" lengthAdjust="spacingAndGlyphs">(22.4%)</text>
<text x="153.5" y="668.7" textLength="26" lengthAdjust="spacingAndGlyphs">($0.00)</text>
<text x="310" y="668.7" textLength="25.5" lengthAdjust="spacingAndGlyphs">(0.00x)</text>
<text x="154.5" y="796" textLength="13.5" lengthAdjust="spacingAndGlyphs">(57)</text>
<text x="310" y="796" textLength="14" lengthAdjust="spacingAndGlyphs">(37)</text>
</g>
<g fill="#4b5160">
<text x="113" y="681.7" textLength="69" lengthAdjust="spacingAndGlyphs">vs. previous period</text>
<text x="270" y="681.7" textLength="68.5" lengthAdjust="spacingAndGlyphs">vs. previous period</text>
</g>
</g>

<path d="M113 449.3 135 451.7 157 448.3 180 453.7 202 466.7H113z" fill="url(#aG)"/>
<polyline points="113,449.3 135,451.7 157,448.3 180,453.7 202,466.7" fill="none" stroke="#059669" stroke-width="1"/>
<path d="M270 449.3 292.7 451.7 315 448.3 337 452 359 466.7H270z" fill="url(#aG)"/>
<polyline points="270,449.3 292.7,451.7 315,448.3 337,452 359,466.7" fill="none" stroke="#059669" stroke-width="1"/>
<path d="M113 563.3 135 565.7 156.7 562.3 180 567.7 201.7 580.7H113z" fill="url(#aG)"/>
<polyline points="113,563.3 135,565.7 156.7,562.3 180,567.7 201.7,580.7" fill="none" stroke="#059669" stroke-width="1"/>
<path d="M269.7 574 292.7 574 315 579 336.7 580.7 359 562.3V580.7H269.7z" fill="url(#aG)"/>
<polyline points="269.7,574 292.7,574 315,579 336.7,580.7 359,562.3" fill="none" stroke="#059669" stroke-width="1"/>
<path d="M113 707.7 136 707.7 158 701 180 689 202 702.3V707.7z" fill="url(#aB)"/>
<polyline points="113,707.7 136,707.7 158,701 180,689 202,702.3" fill="none" stroke="#2f6fdc" stroke-width="1"/>
<path d="M270 707.7 292.7 707.7 314.7 689 336.7 701 359 697.3V707.7z" fill="url(#aP)"/>
<polyline points="270,707.7 292.7,707.7 314.7,689 336.7,701 359,697.3" fill="none" stroke="#7645d8" stroke-width="1"/>
<path d="M113 804.3 135 811 157 803.3 180 816 202 822.3V826H113z" fill="url(#aR)"/>
<polyline points="113,804.3 135,811 157,803.3 180,816 202,822.3" fill="none" stroke="#ea580c" stroke-width="1"/>
<path d="M270 810.7 292.7 815 314.7 803.3 336.7 815.7 359 822.3V826H270z" fill="url(#aR)"/>
<polyline points="270,810.7 292.7,815 314.7,803.3 336.7,815.7 359,822.3" fill="none" stroke="#ea580c" stroke-width="1"/>
</g>
</g>
</g>
</svg>
</body></html>
